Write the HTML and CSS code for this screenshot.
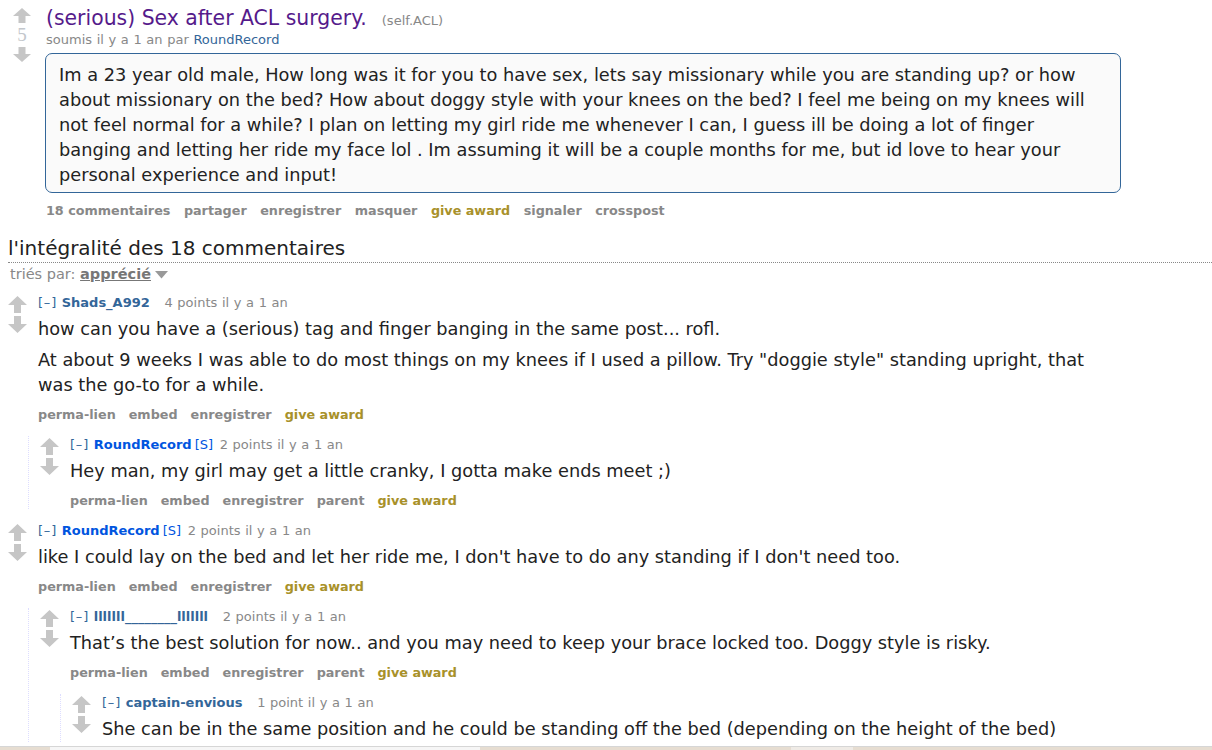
FILE: index.html
```html
<!DOCTYPE html>
<html>
<head>
	<meta charset="utf-8">
	<title>(serious) Sex after ACL surgery.</title>
	<link rel="stylesheet" href="styles.css">
</head>
<body>
<div class="content">
	<div class="link">
		<div class="midcol">
			<svg class="arrow" width="18" height="15" viewBox="0 0 18 15"><polygon points="9,0 18,8 12.5,8 12.5,15 5.5,15 5.5,8 0,8"/></svg>
			<div class="score">5</div>
			<svg class="arrow" width="18" height="15" viewBox="0 0 18 15"><polygon points="9,15 18,7 12.5,7 12.5,0 5.5,0 5.5,7 0,7"/></svg>
		</div>
		<div class="entry">
			<p class="title"><a class="title-link" href="#">(serious) Sex after ACL surgery.</a><span class="domain">(self.ACL)</span></p>
			<p class="tagline">soumis il y a 1 an par <a class="post-author" href="#">RoundRecord</a></p>
			<div class="selftext">
				<p>Im a 23 year old male, How long was it for you to have sex, lets say missionary while you are standing up? or how about missionary on the bed? How about doggy style with your knees on the bed? I feel me being on my knees will not feel normal for a while? I plan on letting my girl ride me whenever I can, I guess ill be doing a lot of finger banging and letting her ride my face lol . Im assuming it will be a couple months for me, but id love to hear your personal experience and input!</p>
			</div>
			<ul class="buttons post-buttons">
				<li>18 commentaires</li>
				<li>partager</li>
				<li>enregistrer</li>
				<li>masquer</li>
				<li class="award">give award</li>
				<li>signaler</li>
				<li>crosspost</li>
			</ul>
		</div>
	</div>

	<h2 class="panestack">l'intégralité des 18 commentaires</h2>
	<div class="sort">triés par: <span class="selected">apprécié</span><svg class="drop" width="13" height="8" viewBox="0 0 13 8"><polygon points="0,0 13,0 6.5,7.5"/></svg></div>

	<div class="nestedlisting">
		<div class="comment">
			<div class="row">
				<div class="midcol">
					<svg class="arrow" width="19" height="17" viewBox="0 0 19 17"><polygon points="9.5,0 19,9 13,9 13,17 6,17 6,9 0,9"/></svg>
					<svg class="arrow" width="19" height="17" viewBox="0 0 19 17"><polygon points="9.5,17 19,8 13,8 13,0 6,0 6,8 0,8"/></svg>
				</div>
				<div class="entry">
					<p class="tagline"><a class="expand" href="#">[–]</a> <a class="author" href="#">Shads_A992</a><span class="userattrs"></span> <span>4 points il y a 1 an</span></p>
					<div class="md">
						<p>how can you have a (serious) tag and finger banging in the same post... rofl.</p>
						<p>At about 9 weeks I was able to do most things on my knees if I used a pillow. Try "doggie style" standing upright, that was the go-to for a while.</p>
					</div>
					<ul class="buttons">
						<li>perma-lien</li>
						<li>embed</li>
						<li>enregistrer</li>
						<li class="award">give award</li>
					</ul>
				</div>
			</div>
			<div class="child">
				<div class="comment">
					<div class="row">
						<div class="midcol">
							<svg class="arrow" width="19" height="17" viewBox="0 0 19 17"><polygon points="9.5,0 19,9 13,9 13,17 6,17 6,9 0,9"/></svg>
							<svg class="arrow" width="19" height="17" viewBox="0 0 19 17"><polygon points="9.5,17 19,8 13,8 13,0 6,0 6,8 0,8"/></svg>
						</div>
						<div class="entry">
							<p class="tagline"><a class="expand" href="#">[–]</a> <a class="author submitter" href="#">RoundRecord</a><span class="userattrs">[<a class="submitter" href="#">S</a>]</span> <span>2 points il y a 1 an</span></p>
							<div class="md">
								<p>Hey man, my girl may get a little cranky, I gotta make ends meet ;)</p>
							</div>
							<ul class="buttons">
								<li>perma-lien</li>
								<li>embed</li>
								<li>enregistrer</li>
								<li>parent</li>
								<li class="award">give award</li>
							</ul>
						</div>
					</div>
				</div>
			</div>
		</div>

		<div class="comment">
			<div class="row">
				<div class="midcol">
					<svg class="arrow" width="19" height="17" viewBox="0 0 19 17"><polygon points="9.5,0 19,9 13,9 13,17 6,17 6,9 0,9"/></svg>
					<svg class="arrow" width="19" height="17" viewBox="0 0 19 17"><polygon points="9.5,17 19,8 13,8 13,0 6,0 6,8 0,8"/></svg>
				</div>
				<div class="entry">
					<p class="tagline"><a class="expand" href="#">[–]</a> <a class="author submitter" href="#">RoundRecord</a><span class="userattrs">[<a class="submitter" href="#">S</a>]</span> <span>2 points il y a 1 an</span></p>
					<div class="md">
						<p>like I could lay on the bed and let her ride me, I don't have to do any standing if I don't need too.</p>
					</div>
					<ul class="buttons">
						<li>perma-lien</li>
						<li>embed</li>
						<li>enregistrer</li>
						<li class="award">give award</li>
					</ul>
				</div>
			</div>
			<div class="child">
				<div class="comment">
					<div class="row">
						<div class="midcol">
							<svg class="arrow" width="19" height="17" viewBox="0 0 19 17"><polygon points="9.5,0 19,9 13,9 13,17 6,17 6,9 0,9"/></svg>
							<svg class="arrow" width="19" height="17" viewBox="0 0 19 17"><polygon points="9.5,17 19,8 13,8 13,0 6,0 6,8 0,8"/></svg>
						</div>
						<div class="entry">
							<p class="tagline"><a class="expand" href="#">[–]</a> <a class="author" href="#">lllllll________lllllll</a><span class="userattrs"></span> <span>2 points il y a 1 an</span></p>
							<div class="md">
								<p>That’s the best solution for now.. and you may need to keep your brace locked too. Doggy style is risky.</p>
							</div>
							<ul class="buttons">
								<li>perma-lien</li>
								<li>embed</li>
								<li>enregistrer</li>
								<li>parent</li>
								<li class="award">give award</li>
							</ul>
						</div>
					</div>
					<div class="child">
						<div class="comment">
							<div class="row">
								<div class="midcol">
									<svg class="arrow" width="19" height="17" viewBox="0 0 19 17"><polygon points="9.5,0 19,9 13,9 13,17 6,17 6,9 0,9"/></svg>
									<svg class="arrow" width="19" height="17" viewBox="0 0 19 17"><polygon points="9.5,17 19,8 13,8 13,0 6,0 6,8 0,8"/></svg>
								</div>
								<div class="entry">
									<p class="tagline"><a class="expand" href="#">[–]</a> <a class="author" href="#">captain-envious</a><span class="userattrs"></span> <span>1 point il y a 1 an</span></p>
									<div class="md">
										<p>She can be in the same position and he could be standing off the bed (depending on the height of the bed)</p>
									</div>
								</div>
							</div>
						</div>
					</div>
				</div>
			</div>
		</div>
	</div>
</div>
<div class="taskbar"><span class="task-a"></span><span class="task-b"></span></div>
</body>
</html>
```

FILE: styles.css
```css
html{
	overflow: hidden;
}
body{
	margin: 0;
	background: #fff;
	color: #222;
	font-family: "DejaVu Sans", Verdana, sans-serif;
}
a{
	text-decoration: none;
}
p{
	margin: 0;
}
.content{
	padding-left: 8px;
}

/* post */
.link{
	display: flex;
	margin-left: 5px;
	padding-top: 6px;
}
.link .midcol{
	width: 18px;
	margin-right: 15px;
	padding-top: 2px;
	flex: none;
}
.arrow{
	display: block;
	fill: #c6c6c6;
}
.score{
	height: 24px;
	line-height: 24px;
	text-align: center;
	font-family: "Liberation Serif", serif;
	font-size: 19px;
	color: #c3c7cc;
}
.title{
	font-size: 20.4px;
	line-height: 24px;
}
.title-link{
	color: #551a8b;
}
.domain{
	margin-left: 15px;
	font-size: 13px;
	color: #888;
}
.tagline{
	margin-top: -1px;
	font-size: 13px;
	line-height: 16px;
	word-spacing: 0.5px;
	color: #888;
}
.post-author{
	color: #369;
}
.selftext{
	box-sizing: border-box;
	width: 1076px;
	margin: 5px 0 0 -1px;
	padding: 9px 12px 4px 13px;
	background: #fafafa;
	border: 1px solid #369;
	border-radius: 7px;
	font-size: 17.75px;
	line-height: 25px;
}
.buttons{
	display: flex;
	margin: 0;
	padding: 8.5px 0 0;
	list-style: none;
	font-size: 12.75px;
	font-weight: bold;
	line-height: 16px;
	color: #888;
}
.buttons li{
	margin-right: 13px;
}
.post-buttons{
	padding-top: 10px;
}
.post-buttons li{
	margin-right: 13.5px;
}
.buttons .award{
	color: #a8912a;
}

/* comments header */
.panestack{
	margin: 17px 0 0;
	padding-bottom: 2px;
	border-bottom: 1px dotted #888;
	font-size: 20px;
	font-weight: normal;
	line-height: 24px;
	color: #222;
}
.sort{
	margin: 2px 0 0 2px;
	font-size: 14.5px;
	line-height: 18px;
	color: #888;
}
.sort .selected{
	font-weight: bold;
	color: #777;
	text-decoration: underline;
}
.drop{
	margin-left: 4px;
	fill: #999;
}

/* comments */
.nestedlisting{
	margin-top: -2.5px;
}
.comment{
	margin-top: 13.5px;
	padding-top: 1px;
}
.row{
	display: flex;
}
.row .midcol{
	width: 30px;
	flex: none;
	padding-top: 1px;
}
.row .midcol .arrow + .arrow{
	margin-top: 3px;
}
.comment .tagline{
	margin-top: 0;
}
.expand{
	letter-spacing: 0.8px;
	color: #369;
}
.author{
	margin-right: 3px;
	font-weight: bold;
	color: #369;
}
.author.submitter,
.submitter{
	color: #0055df;
}
.userattrs{
	margin-right: 2px;
	color: #0055df;
}
.userattrs:empty{
	margin-right: 7px;
}
.md{
	max-width: 1050px;
	margin-top: 6px;
	font-size: 17.75px;
	line-height: 25px;
}
.md p{
	margin-bottom: 6px;
}
.md p:last-child{
	margin-bottom: 0;
}
.child{
	margin-left: 20px;
	padding-left: 11px;
	border-left: 1px dotted #ddf;
}

.taskbar{
	position: fixed;
	left: 0;
	right: 0;
	bottom: 0;
	height: 3px;
	background: #e6ddd1;
	border-top: 1px solid #d6d6d6;
}
.task-a{
	position: absolute;
	left: 50px;
	width: 430px;
	top: 0;
	bottom: 0;
	background: #f6f6f6;
}
.task-b{
	position: absolute;
	left: 791px;
	width: 62px;
	top: 0;
	bottom: 0;
	background: #efebe6;
}
```
